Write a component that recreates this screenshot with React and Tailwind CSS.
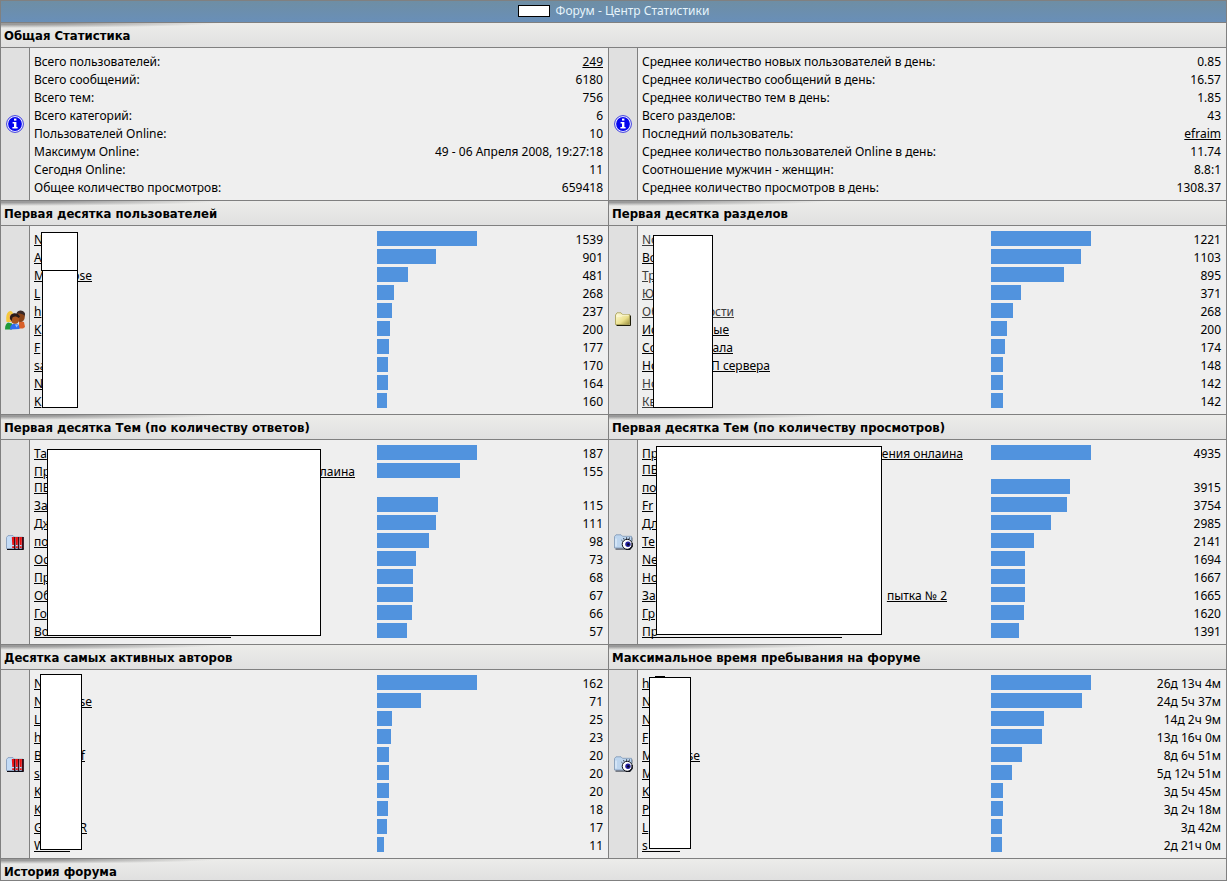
import React from "react";
import clsx from "clsx";

const overview = [
  ["Всего пользователей:", "249", true],
  ["Всего сообщений:", "6180"],
  ["Всего тем:", "756"],
  ["Всего категорий:", "6"],
  ["Пользователей Online:", "10"],
  ["Максимум Online:", "49 - 06 Апреля 2008, 19:27:18"],
  ["Сегодня Online:", "11"],
  ["Общее количество просмотров:", "659418"],
];

const averages = [
  ["Среднее количество новых пользователей в день:", "0.85"],
  ["Среднее количество сообщений в день:", "16.57"],
  ["Среднее количество тем в день:", "1.85"],
  ["Всего разделов:", "43"],
  ["Последний пользователь:", "efraim", true],
  ["Среднее количество пользователей Online в день:", "11.74"],
  ["Соотношение мужчин - женщин:", "8.8:1"],
  ["Среднее количество просмотров в день:", "1308.37"],
];

// head / tail are the parts of a name left visible around a cover
const topUsers = [
  { head: "N", bar: 100, value: "1539" },
  { head: "A", bar: 59, value: "901" },
  { head: "M", tail: "ose", width: "w-[58px]", bar: 31, value: "481" },
  { head: "L", bar: 17, value: "268" },
  { head: "h", bar: 15, value: "237" },
  { head: "K", bar: 13, value: "200" },
  { head: "F", bar: 12, value: "177" },
  { head: "sa", bar: 11, value: "170" },
  { head: "N", bar: 11, value: "164" },
  { head: "K", bar: 10, value: "160" },
];

const topForums = [
  { head: "No", muted: true, bar: 100, value: "1221" },
  { head: "Во", bar: 90, value: "1103" },
  { head: "Тр", muted: true, bar: 73, value: "895" },
  { head: "Ю", muted: true, bar: 30, value: "371" },
  { head: "Об", tail: "ости", width: "w-[92px]", muted: true, bar: 22, value: "268" },
  { head: "Ис", tail: "ные", width: "w-[87px]", bar: 16, value: "200" },
  { head: "Со", tail: "ала", width: "w-[91px]", bar: 14, value: "174" },
  { head: "Но", tail: "П сервера", width: "w-[128px]", bar: 12, value: "148" },
  { head: "Но", muted: true, bar: 12, value: "142" },
  { head: "Кв", muted: true, bar: 12, value: "142" },
];

const topReplies = [
  { head: "Та", bar: 100, value: "187" },
  { head: "Пр", tail: "лаина", next: "ПВ", width: "w-[321px]", bar: 83, value: "155" },
  { head: "За", bar: 61, value: "115" },
  { head: "Дж", bar: 59, value: "111" },
  { head: "по", bar: 52, value: "98" },
  { head: "Ос", bar: 39, value: "73" },
  { head: "Пр", bar: 36, value: "68" },
  { head: "Об", bar: 36, value: "67" },
  { head: "Го", bar: 35, value: "66" },
  { head: "Во", width: "w-[197px]", ruled: true, bar: 30, value: "57" },
];

const topViews = [
  { head: "Пр", tail: "ения онлаина", next: "ПВ", width: "w-[321px]", bar: 100, value: "4935" },
  { head: "по", bar: 79, value: "3915" },
  { head: "Fr", bar: 76, value: "3754" },
  { head: "Дл", bar: 60, value: "2985" },
  { head: "Те", bar: 43, value: "2141" },
  { head: "Ne", bar: 34, value: "1694" },
  { head: "Но", bar: 34, value: "1667" },
  { head: "За", tail: "пытка № 2", width: "w-[305px]", bar: 34, value: "1665" },
  { head: "Гр", bar: 33, value: "1620" },
  { head: "Пр", width: "w-[200px]", ruled: true, bar: 28, value: "1391" },
];

const topAuthors = [
  { head: "N", bar: 100, value: "162" },
  { head: "N", tail: "se", width: "w-[58px]", bar: 44, value: "71" },
  { head: "L", bar: 15, value: "25" },
  { head: "h", bar: 14, value: "23" },
  { head: "B", tail: "f", width: "w-[51px]", bar: 12, value: "20" },
  { head: "s", bar: 12, value: "20" },
  { head: "K", bar: 12, value: "20" },
  { head: "K", bar: 11, value: "18" },
  { head: "G", tail: "R", width: "w-[53px]", bar: 10, value: "17" },
  { head: "W", width: "w-[36px]", ruled: true, bar: 7, value: "11" },
];

const topOnline = [
  { head: "h", bar: 100, value: "26д 13ч 4м" },
  { head: "N", bar: 91, value: "24д 5ч 37м" },
  { head: "N", bar: 53, value: "14д 2ч 9м" },
  { head: "F", bar: 51, value: "13д 16ч 0м" },
  { head: "M", tail: "se", width: "w-[58px]", bar: 31, value: "8д 6ч 51м" },
  { head: "M", bar: 21, value: "5д 12ч 51м" },
  { head: "K", bar: 12, value: "3д 5ч 45м" },
  { head: "P", bar: 12, value: "3д 2ч 18м" },
  { head: "L", bar: 11, value: "3д 42м" },
  { head: "s", width: "w-[38px]", ruled: true, bar: 11, value: "2д 21ч 0м" },
];

const InfoIcon = () => (
  <svg className="size-[18px]" viewBox="0 0 18 18">
    <circle cx="9" cy="9" r="8.4" fill="#f4f4ff" stroke="#3a3ae0" strokeWidth="1" />
    <circle cx="9" cy="9" r="6.9" fill="#0606ee" />
    <rect x="8" y="3.6" width="2.4" height="2" fill="#fff" />
    <path d="M6.6 7h3.8v5h1.2v1.4H6.4V12H8V8.4H6.6z" fill="#fff" />
  </svg>
);

const UsersIcon = () => (
  <svg className="size-5" viewBox="0 0 20 20">
    <path d="M0 19.500c0-4 1-6 3-7l4 1v6z" fill="#1f9a3c" />
    <path d="M1.500 12C.5 6 2 1 5.500 1 7 1 8 2 8 5l-2 7z" fill="#f5c83a" />
    <path d="M4 5l3-1v5l-2 2z" fill="#f3a97a" />
    <path d="M14 11l5 1 1 5-2 1.500h-4z" fill="#d9602a" />
    <ellipse cx="15.500" cy="6.500" rx="4.300" ry="5.600" fill="#8a4318" />
    <path d="M11.500 3.500c1-4 7-4 8.500 0v2.500c-2-2-5-3-8.500-2z" fill="#3a2a28" />
    <path d="M5 19.500c0-4 2-6 5.500-6 3 0 4 2 4 5.500z" fill="#2f6cf0" />
    <ellipse cx="10" cy="9" rx="4.300" ry="4.800" fill="#a8561f" />
    <path d="M5 9c-1-6 7-8 10-2.500L13.500 8c-2-2-4-2-6-.5L6.500 11z" fill="#2b1c18" />
    <path d="M10 14.500l1.500 3 2-3z" fill="#8fc0ff" />
  </svg>
);

const FolderIcon = () => (
  <svg className="h-4 w-4" viewBox="0 0 16 16">
    <defs>
      <linearGradient id="folderFill" x1="0" y1="0" x2="1" y2="1">
        <stop offset="0" stopColor="#fffde0" />
        <stop offset="0.6" stopColor="#ebe08c" />
        <stop offset="1" stopColor="#9a8e3c" />
      </linearGradient>
    </defs>
    <path d="M1.500 13.500h14v-10" fill="none" stroke="#1e1c08" strokeWidth="1" />
    <path d="M.5 12.500V3L2 .8h4L7.500 2.500h7v10z" fill="url(#folderFill)" stroke="#a39a4c" strokeWidth="0.8" />
    <path d="M1.500 4.200L6.500 4l1.200-.9h6" fill="none" stroke="#fffef0" strokeWidth="0.7" />
  </svg>
);

const HotTopicIcon = () => (
  <svg className="h-[15px] w-[18px]" viewBox="0 0 18 15">
    <path d="M1 14.500h16.500V2" fill="none" stroke="#0a0a14" strokeWidth="1" />
    <path d="M.5 13.500V2.500L2 .6h5l1.500 1.600H17v11.300z" fill="#c3dbf6" stroke="#7f97b8" strokeWidth="0.8" />
    <path d="M8 2h1.500v12H8zM11.800 2h1.500v12h-1.500zM15.800 2h1.700v12h-1.700z" fill="#3c0c16" />
    <path d="M5.800 2h2.400l-.3 8H6.300zM9.500 2h2.500l-.3 8h-1.700zM13.400 2h2.500l-.3 8h-1.700z" fill="#ee1010" />
    <path d="M6.200 11.200h1.800V13H6.200zM10 11.200h1.800V13H10zM13.800 11.200h1.800V13h-1.800z" fill="#ee1010" />
  </svg>
);

const ViewedTopicIcon = () => (
  <svg className="h-4 w-[19px]" viewBox="0 0 19 16">
    <path d="M1.500 15h10M17.800 3.500v4" fill="none" stroke="#141c2c" strokeWidth="1" />
    <path d="M.5 14V2.600L2 .8h5l1.500 1.500h9V14z" fill="#bdd5ee" stroke="#7c95b4" strokeWidth="0.8" />
    <path d="M2 4.500v8" stroke="#e2effb" strokeWidth="1.200" />
    <path d="M8.500 7l-1-.8M10 5.500l-.4-1.400M12.500 4.800l.1-1.500M15 5l.5-1.500" stroke="#1c2233" strokeWidth="0.9" />
    <circle cx="13.200" cy="10.300" r="5" fill="#fff" stroke="#0d0f18" strokeWidth="1" />
    <path d="M18.200 9v3.500l-2.500 3h-4" fill="none" stroke="#0d0f18" strokeWidth="1.200" />
    <circle cx="14" cy="10.300" r="2.700" fill="#2420a0" />
    <circle cx="14.300" cy="10.400" r="1.200" fill="#05051c" />
  </svg>
);

const Heading = ({ children, className }) => (
  <h2
    className={clsx(
      "border-r border-[#808080] pt-[5px] pl-[3px] font-['DejaVu_Sans_Condensed','DejaVu_Sans',sans-serif] text-[13px] leading-4 font-bold",
      "bg-[radial-gradient(ellipse_220px_5px_at_0_0,#9a9a9a_30%,transparent),linear-gradient(#ececea,#e0e0e0)]",
      className || "h-6"
    )}
  >
    {children}
  </h2>
);

const Panel = ({ icon, covers = [], children }) => (
  <div className="flex border-y border-r border-[#808080] bg-[#efefef]">
    <div className="flex w-[29px] shrink-0 items-center justify-center border-r border-[#808080] bg-[#e0e0e0]">
      {icon}
    </div>
    <div className="relative min-w-0 grow py-1">
      {children}
      {covers.map((cover) => (
        <span key={cover} className={clsx("absolute border border-black bg-white", cover)} />
      ))}
    </div>
  </div>
);

const StatTable = ({ rows }) => (
  <table className="w-full">
    <tbody>
      {rows.map(([label, value, linked]) => (
        <tr key={label}>
          <th scope="row" className="pt-0.5 pl-1 text-left font-normal">
            {label}
          </th>
          <td className="pt-0.5 pr-[5px] text-right">
            {linked ? (
              <a href="#" className="underline">
                {value}
              </a>
            ) : (
              value
            )}
          </td>
        </tr>
      ))}
    </tbody>
  </table>
);

const RankTable = ({ rows }) => (
  <table className="w-full table-fixed">
    <tbody>
      {rows.map((row, index) => (
        <tr key={index} className="align-top">
          <th scope="row" className="w-3/5 pt-0.5 pl-1 text-left font-normal">
            <a
              href="#"
              className={clsx(
                "flex justify-between whitespace-nowrap",
                row.width || "w-fit",
                row.muted && "text-[#3c3c3c]",
                row.ruled ? "mb-0.5 h-[14px] border-b border-black" : "underline"
              )}
            >
              <span>{row.head}</span>
              {row.tail && <span>{row.tail}</span>}
            </a>
            {row.next && (
              <a href="#" className="block w-fit underline">
                {row.next}
              </a>
            )}
          </th>
          <td className="pt-px">
            <div className="h-[15px] bg-[#5193de]" style={{ width: row.bar }} />
          </td>
          <td className="pt-0.5 pr-[5px] text-right whitespace-nowrap">{row.value}</td>
        </tr>
      ))}
    </tbody>
  </table>
);

const Row = ({ children }) => <div className="grid grid-cols-[608fr_618fr]">{children}</div>;

export default function App() {
  return (
    <main className="mr-px border-l border-[#808080] bg-[#efefef] font-['Noto_Sans',sans-serif] text-[12px] leading-4 text-black">
      <header className="flex h-[23px] items-center justify-center gap-1.5 border-y border-r border-[#808080] bg-linear-to-b from-[#6e8ea4] to-[#698fb8] pb-0.5 text-[#e6f4fc]">
        <span className="h-3 w-8 border border-black bg-white" />
        <h1>Форум - Центр Статистики</h1>
      </header>

      <Heading>Общая Статистика</Heading>
      <Row>
        <Panel icon={<InfoIcon />}>
          <StatTable rows={overview} />
        </Panel>
        <Panel icon={<InfoIcon />}>
          <StatTable rows={averages} />
        </Panel>
      </Row>

      <Row>
        <Heading>Первая десятка пользователей</Heading>
        <Heading>Первая десятка разделов</Heading>
        <Panel
          icon={<UsersIcon />}
          covers={[
            "top-[6px] left-[11px] h-[39px] w-[37px]",
            "top-[44px] left-[12px] h-[138px] w-[36px]",
          ]}
        >
          <RankTable rows={topUsers} />
        </Panel>
        <Panel icon={<FolderIcon />} covers={["top-[9px] left-[15px] h-[173px] w-[60px]"]}>
          <RankTable rows={topForums} />
        </Panel>
      </Row>

      <Row>
        <Heading>Первая десятка Тем (по количеству ответов)</Heading>
        <Heading>Первая десятка Тем (по количеству просмотров)</Heading>
        <Panel icon={<HotTopicIcon />} covers={["top-[9px] left-[17px] h-[187px] w-[274px]"]}>
          <RankTable rows={topReplies} />
        </Panel>
        <Panel icon={<ViewedTopicIcon />} covers={["top-[6px] left-[18px] h-[189px] w-[226px]"]}>
          <RankTable rows={topViews} />
        </Panel>
      </Row>

      <Row>
        <Heading>Десятка самых активных авторов</Heading>
        <Heading>Максимальное время пребывания на форуме</Heading>
        <Panel icon={<HotTopicIcon />} covers={["top-[4px] left-[10px] h-[176px] w-[42px]"]}>
          <RankTable rows={topAuthors} />
        </Panel>
        <Panel
          icon={<ViewedTopicIcon />}
          covers={["top-[6px] left-[17px] h-[2px] w-[10px]", "top-[7px] left-[11px] h-[172px] w-[42px]"]}
        >
          <RankTable rows={topOnline} />
        </Panel>
      </Row>

      <Heading className="h-[22px] border-b">История форума</Heading>
    </main>
  );
}
